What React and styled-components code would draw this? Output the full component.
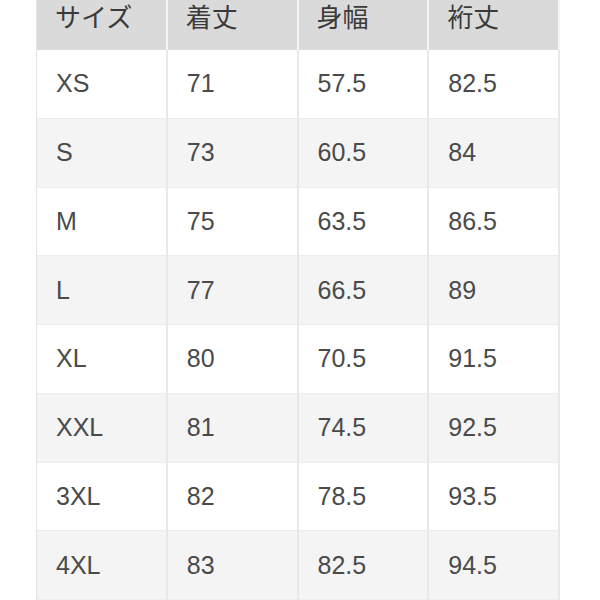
import styled, { createGlobalStyle } from 'styled-components';

const GlobalStyle = createGlobalStyle`
  html, body {
    margin: 0;
    padding: 0;
    background: #fff;
  }
`;

const Page = styled.div`
  width: 600px;
  height: 600px;
  overflow: hidden;
  padding-left: 36px;
  box-sizing: border-box;
  font-family: "Liberation Sans", Arial, "Noto Sans CJK JP", sans-serif;
`;

const Table = styled.div`
  display: grid;
  grid-template-columns: repeat(4, 130.75px);
  grid-auto-rows: 68.75px;
  grid-template-rows: 50px;
  border-left: 1px solid #e2e2e2;
  width: max-content;
`;

const HeadCell = styled.div`
  background: #dadada;
  border-right: 2px solid #f6f6f6;
  color: #3a3a3a;
  font-family: "Noto Sans CJK JP", "Liberation Sans", sans-serif;
  font-size: 26px;
  line-height: 30px;
  padding: 1px 0 0 18px;
  box-sizing: border-box;
`;

const Cell = styled.div`
  display: flex;
  align-items: center;
  padding-left: 19px;
  box-sizing: border-box;
  background: ${p => (p.$shade ? '#f4f4f4' : '#fff')};
  border-right: 2px solid #e8e8e8;
  border-bottom: 1px solid #ececec;
  color: #4a4a4a;
  font-size: 25px;
`;

const headers = ['サイズ', '着丈', '身幅', '裄丈'];

const rows = [
  ['XS', '71', '57.5', '82.5'],
  ['S', '73', '60.5', '84'],
  ['M', '75', '63.5', '86.5'],
  ['L', '77', '66.5', '89'],
  ['XL', '80', '70.5', '91.5'],
  ['XXL', '81', '74.5', '92.5'],
  ['3XL', '82', '78.5', '93.5'],
  ['4XL', '83', '82.5', '94.5'],
];

export default function App() {
  return (
    <Page>
      <GlobalStyle />
      <Table>
        {headers.map(h => (
          <HeadCell key={h}>{h}</HeadCell>
        ))}
        {rows.map((r, i) =>
          r.map((v, j) => (
            <Cell key={`${i}-${j}`} $shade={i % 2 === 1}>
              {v}
            </Cell>
          ))
        )}
      </Table>
    </Page>
  );
}
